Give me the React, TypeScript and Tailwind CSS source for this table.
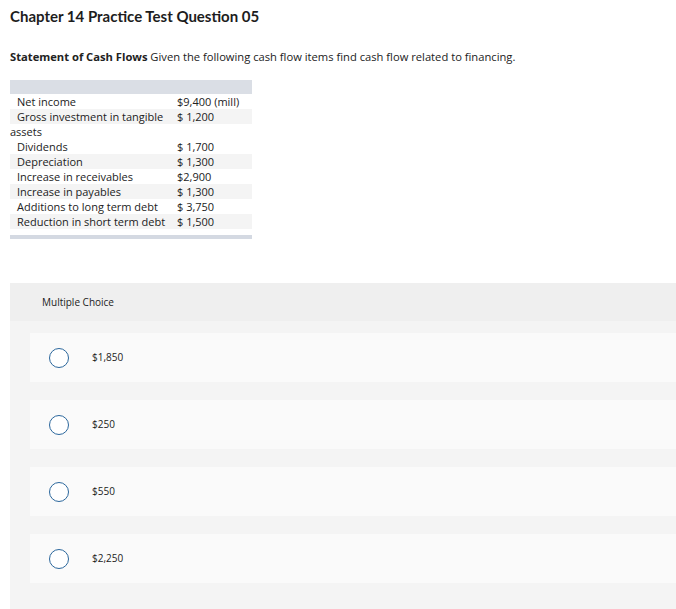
import React from "react";

const rows: { label: string; value: string; shade: boolean; wrap?: boolean }[] = [
  { label: "Net income", value: "$9,400 (mill)", shade: false },
  { label: "Gross investment in tangible", value: "$ 1,200", shade: true, wrap: true },
  { label: "Dividends", value: "$ 1,700", shade: false },
  { label: "Depreciation", value: "$ 1,300", shade: true },
  { label: "Increase in receivables", value: "$2,900", shade: false },
  { label: "Increase in payables", value: "$ 1,300", shade: true },
  { label: "Additions to long term debt", value: "$ 3,750", shade: false },
  { label: "Reduction in short term debt", value: "$ 1,500", shade: true },
];

const choices = ["$1,850", "$250", "$550", "$2,250"];

const App = () => {
  return (
    <div className="w-[676px] h-[609px] overflow-hidden bg-white text-[#222] font-['Open_Sans','Liberation_Sans',sans-serif]">
      <h1 className="pl-[10px] pt-[6px] text-[15px] leading-[20px] font-bold text-[#1d1d1d] font-['Lato','Liberation_Sans',sans-serif]">
        Chapter 14 Practice Test Question 05
      </h1>
      <p className="pl-[10px] mt-[23px] text-[11.2px] leading-[15px]">
        <span className="font-bold">Statement of Cash Flows</span> Given the following cash flow items find cash flow
        related to financing.
      </p>

      <div className="ml-[10px] mt-[16px] w-[242px] text-[11px]">
        <div className="h-[14px] bg-[#dadee5]" />
        {rows.map((r) => (
          <React.Fragment key={r.label}>
            <div className={`flex h-[15px] leading-[15px] ${r.shade ? "bg-[#f4f4f4]" : "bg-white"}`}>
              <div className="w-[167px] pl-[7px] whitespace-nowrap">{r.label}</div>
              <div className="whitespace-nowrap">{r.value}</div>
            </div>
            {r.wrap && <div className="h-[15px] leading-[15px]">assets</div>}
          </React.Fragment>
        ))}
        <div className="mt-[6px] h-[4px] bg-[#d4d9e2]" />
      </div>

      <div className="ml-[10px] mt-[44px] bg-[#f4f4f4] h-[400px]">
        <div className="h-[38px] bg-[#efefef] pl-[32px] flex items-center text-[10px]">Multiple Choice</div>
        <div className="pl-[20px] pt-[12px] flex flex-col gap-[18px]">
          {choices.map((c) => (
            <div key={c} className="h-[49px] bg-[#fafafa] flex items-center">
              <span className="ml-[19px] w-[20px] h-[20px] rounded-full border-[1.5px] border-[#2b679c] bg-white" />
              <span className="ml-[23px] text-[10px]">{c}</span>
            </div>
          ))}
        </div>
      </div>
    </div>
  );
};

export default App;
